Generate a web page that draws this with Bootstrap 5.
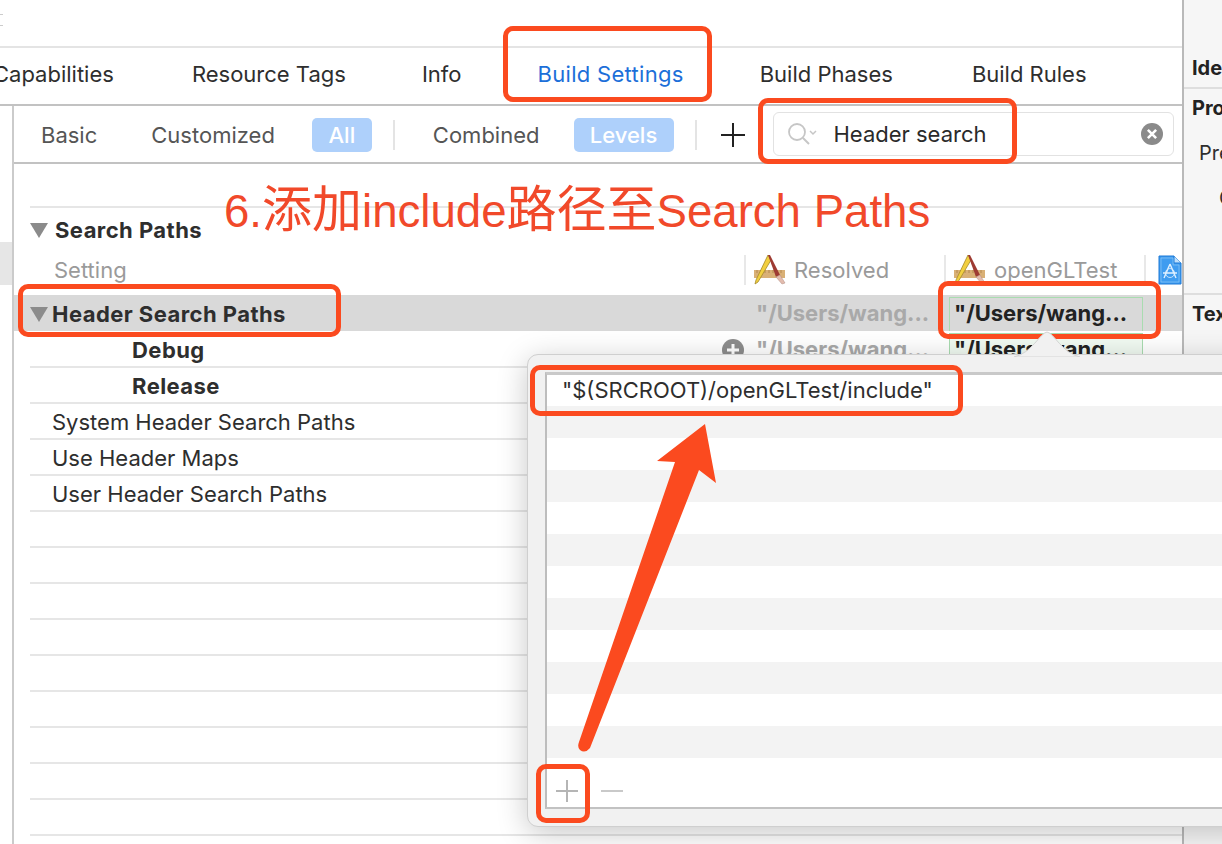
<!doctype html>
<html lang="en">
<head>
<meta charset="utf-8">
<title>Build Settings</title>
<link rel="stylesheet" href="https://cdn.jsdelivr.net/npm/bootstrap@5.3.0/dist/css/bootstrap.min.css">
<style>
html,body{margin:0;background:#fff}
.stage{position:relative;width:1222px;height:844px;overflow:hidden;background:#fff;font-family:Inter,"Liberation Sans",sans-serif;color:#2e2e2e;font-size:22px;line-height:1}
.workspace{width:1182px;flex:none}
.side-panel{flex:1;border-left:2px solid #b9b9b9;background:#f6f6f6;overflow:hidden}
.topbar{height:48px;border-bottom:2px solid #e4e4e4}
.tabbar{height:58px;border-bottom:2px solid #c2c2c2;gap:78px;margin-left:-7px;padding-bottom:5px;white-space:nowrap}
.tabbar span.on{color:#1c6fd9;margin-left:-2px;letter-spacing:.3px}
.t-info{margin-left:-2px}
.t-bp{margin-left:-2px}
.t-br{margin-left:1px}
.left-rail{width:14px;flex:none;border-right:2px solid #cbcbcb;padding-top:136px}
.rail-sel{height:43px;background:#e6e6e6}
.filters{height:58px;border-bottom:2px solid #c2c2c2;padding:2px 0 0 27px;color:#555;white-space:nowrap}
.f-custom{margin-left:54px}
.f-pill{background:#aed0fb;color:#fff;border-radius:5px;height:34px;display:flex;align-items:center;justify-content:center;font-weight:500}
.f-all{width:60px;margin-left:37px}
.f-lev{width:100px;margin-left:34px}
.f-sep{width:2px;height:30px;margin-left:21px;background:#e4e4e4}
.f-comb{margin-left:38px}
.f-add{margin-left:24px}
.searchbox{width:401px;height:44px;border:1.5px solid #e2e2e2;border-radius:6px;margin:-2px 0 0 28px;color:#2a2a2a;padding:0 10px 0 13px}
.search-txt{margin-left:15px}
.rule-top{height:44px;border-bottom:2px solid #e6e6e6;margin-left:16px}
.sec-row{height:44px;font-weight:700;letter-spacing:.45px;margin-left:16px;gap:7px;color:#2e2e2e}
.tri{width:0;height:0;border-left:9px solid transparent;border-right:9px solid transparent;border-top:15px solid #8b8b8b;flex:none}
.tri-gap{margin-right:4px}
.head-row{height:43px;color:#9a9a9a;padding:0 0 8px 40px}
.val-col{width:200px;flex:none}
.val-sep{border-left:2px solid #e8e8e8;height:30px;padding-left:8px;display:flex;align-items:center;gap:8px}
.last-col{width:38px;flex:none}
.blue-doc{margin-left:4px;flex:none}
.name-col{flex:1}
.set-row{height:36px;margin-left:16px;border-bottom:2px solid #e6e6e6;padding:2px 0 0 22px;white-space:nowrap}
.set-row.hi{background:#d9d9d9;border:0;margin-left:0;padding-left:16px;font-weight:700}
.set-row.sub{font-weight:700;padding-left:102px}
.set-row.first{height:37px;padding-top:3px}
.hi .name-col{letter-spacing:.45px}
.sub .name-col,.sub-name{letter-spacing:.45px}
.val-txt{font-weight:700;color:#a9a9a9;padding:0 0 3px 12px}
.val-own{font-weight:700;color:#222;margin-left:5px;width:194px;height:34px;border:1.5px solid #a9dcb0;border-bottom:0;padding:0 0 3px 4px;display:flex;align-items:center}
.sub .val-own{background:#f1faf2}
.pop{position:absolute;left:527px;top:354px;width:760px;height:473px;background:#f1f1f1;border:1.5px solid #cfcfcf;border-radius:11px;box-shadow:0 6px 30px rgba(0,0,0,.22);padding:17px 0 17px 17px}
.pop-beak{position:absolute;left:1014px;top:331px;z-index:2}
.pop-inner{height:437px;background:#fff;border-left:2px solid #bdbdbd;border-top:3px solid #c9c9c9;border-bottom:2px solid #c2c2c2}
.pl-row{height:32px;padding-left:15px;white-space:nowrap;color:#2e2e2e}
.pl-row:first-child{height:31px;padding-bottom:2px}
.pl-row:nth-child(2n){background:#f3f3f3}
.pop-tools{height:50px;gap:23px;padding:16px 0 0 9px}
.note{position:absolute;border:5px solid #fb4a1f;border-radius:10px;pointer-events:none}
.n1{left:503px;top:26px;width:209px;height:76px}
.n2{left:758px;top:98px;width:259px;height:66px}
.n3{left:18px;top:284px;width:323px;height:53px}
.n4{left:938px;top:281px;width:223px;height:58px}
.n5{left:530px;top:365px;width:433px;height:51px}
.n6{left:536px;top:764px;width:54px;height:59px}
.big-note{position:absolute;left:224px;top:184px;font:45.6px/52px "Liberation Sans","Noto Sans CJK SC",sans-serif;color:#f1492a;white-space:nowrap}
.cjk-part{font-size:50px}
.arrow{position:absolute;left:560px;top:410px}
.frag{position:absolute;white-space:nowrap;font-size:20px}
.frag.bold{font-weight:700;color:#222}
.f1{left:1192px;top:58px}.f2{left:1192px;top:98px}.f3{left:1199px;top:143px}.f4{left:1219px;top:188px}.f5{left:1192px;top:304px}
.p-rule{position:absolute;left:1184px;width:38px;height:2px;background:#dedede}
.r1{top:87px}.r2{top:293px}
.tick{position:absolute;left:0;top:14px;width:3px;height:12px;border-top:1.5px solid #ccc;border-bottom:1.5px solid #ccc}
</style>
</head>
<body>
<div class="stage d-flex">
  <div class="workspace">
    <div class="topbar"></div>
    <div class="tabbar d-flex align-items-center">
      <span>Capabilities</span><span>Resource Tags</span><span class="t-info">Info</span><span class="on">Build Settings</span><span class="t-bp">Build Phases</span><span class="t-br">Build Rules</span>
    </div>
    <div class="d-flex">
      <div class="left-rail"><div class="rail-sel"></div></div>
      <div class="flex-grow-1">
        <div class="filters d-flex align-items-center">
          <span>Basic</span>
          <span class="f-custom">Customized</span>
          <span class="f-pill f-all">All</span>
          <span class="f-sep"></span>
          <span class="f-comb">Combined</span>
          <span class="f-pill f-lev">Levels</span>
          <span class="f-sep"></span>
          <svg class="f-add" width="24" height="24" viewBox="0 0 24 24" aria-hidden="true"><path d="M12 0v24M0 12h24" stroke="#222" stroke-width="2"/></svg>
          <div class="searchbox d-flex align-items-center">
            <svg width="32" height="26" viewBox="0 0 32 26" aria-hidden="true"><circle cx="10" cy="11" r="8" fill="none" stroke="#c6c6c6" stroke-width="1.8"/><path d="M16 17l6 6" stroke="#c6c6c6" stroke-width="2"/><path d="M23 10l3 3 3-3" fill="none" stroke="#c6c6c6" stroke-width="1.5"/></svg>
            <span class="search-txt">Header search</span>
            <svg class="ms-auto" width="22" height="22" viewBox="0 0 24 24" aria-hidden="true"><circle cx="12" cy="12" r="12" fill="#8a8a8a"/><path d="M7.5 7.5l9 9M16.5 7.5l-9 9" stroke="#fff" stroke-width="2.8"/></svg>
          </div>
        </div>
        <div class="rule-top"></div>
        <div class="sec-row d-flex align-items-center"><span class="tri"></span><span>Search Paths</span></div>
        <div class="head-row d-flex align-items-center">
          <span class="name-col">Setting</span>
          <div class="val-col"><div class="val-sep">
            <svg width="32" height="30" viewBox="0 0 32 30" aria-hidden="true"><use href="#xc"/></svg><span>Resolved</span></div></div>
          <div class="val-col"><div class="val-sep">
            <svg width="32" height="30" viewBox="0 0 32 30" aria-hidden="true"><use href="#xc"/></svg><span>openGLTest</span></div></div>
          <div class="last-col"><div class="val-sep"><svg class="blue-doc" width="24" height="30" viewBox="0 0 24 30" aria-hidden="true"><path d="M1 1h15l7 7v21H1z" fill="#3f9cf0" stroke="#1c78d6"/><path d="M16 1v7h7" fill="#bfe0fb" stroke="#1c78d6"/><path d="M3 3h12v7h6v17H3z" fill="none" stroke="#8cc8f7" stroke-width=".7"/><path d="M12 9l-6 14M12 9l6 14M5 18h14" stroke="#dff0ff" stroke-width="1.4" fill="none"/><circle cx="12" cy="18" r="4.5" fill="none" stroke="#dff0ff" stroke-width=".8"/></svg></div></div>
        </div>
        <div class="set-row hi d-flex align-items-center">
          <span class="tri tri-gap"></span>
          <span class="name-col">Header Search Paths</span>
          <div class="val-col val-txt">"/Users/wang...</div>
          <div class="val-col align-self-end"><div class="val-own">"/Users/wang...</div></div>
          <div class="last-col"></div>
        </div>
        <div class="set-row sub first d-flex align-items-center">
          <span class="name-col">Debug</span>
          <svg width="22" height="22" viewBox="0 0 22 22" aria-hidden="true"><circle cx="11" cy="11" r="11" fill="#8d8d8d"/><path d="M11 5v12M5 11h12" stroke="#fff" stroke-width="3"/></svg>
          <div class="val-col val-txt">"/Users/wang...</div>
          <div class="val-col"><div class="val-own">"/Users/wang...</div></div>
          <div class="last-col"></div>
        </div>
        <div class="set-row sub d-flex align-items-center"><span class="sub-name">Release</span></div>
        <div class="set-row d-flex align-items-center">System Header Search Paths</div>
        <div class="set-row d-flex align-items-center">Use Header Maps</div>
        <div class="set-row d-flex align-items-center">User Header Search Paths</div>
        <div class="set-row"></div><div class="set-row"></div><div class="set-row"></div><div class="set-row"></div><div class="set-row"></div><div class="set-row"></div><div class="set-row"></div><div class="set-row"></div><div class="set-row"></div><div class="set-row"></div>
      </div>
    </div>
  </div>
  <div class="side-panel"></div>

  <span class="tick"></span>
  <span class="frag bold f1">Ide</span>
  <span class="p-rule r1"></span>
  <span class="frag bold f2">Pro</span>
  <span class="frag f3">Pre</span>
  <span class="frag f4">C</span>
  <span class="p-rule r2"></span>
  <span class="frag bold f5">Tex</span>

  <svg class="pop-beak" width="66" height="26" viewBox="0 0 66 26" aria-hidden="true"><path d="M0 26C18 22 26 2 33 1c7 1 15 21 33 25z" fill="#f1f1f1" stroke="#d4d4d4" stroke-width="1"/></svg>
  <div class="pop">
    <div class="pop-inner">
      <div class="pl-row d-flex align-items-center">"$(SRCROOT)/openGLTest/include"</div>
      <div class="pl-row"></div><div class="pl-row"></div><div class="pl-row"></div><div class="pl-row"></div><div class="pl-row"></div><div class="pl-row"></div><div class="pl-row"></div><div class="pl-row"></div><div class="pl-row"></div><div class="pl-row"></div><div class="pl-row"></div>
      <div class="pop-tools d-flex align-items-center">
        <svg width="22" height="22" viewBox="0 0 22 22" aria-hidden="true"><path d="M11 0v22M0 11h22" stroke="#b5b5b5" stroke-width="2"/></svg>
        <svg width="22" height="22" viewBox="0 0 22 22" aria-hidden="true"><path d="M0 11h22" stroke="#c9c9c9" stroke-width="2"/></svg>
      </div>
    </div>
  </div>

  <div class="big-note">6.<span class="cjk-part">添加</span>include<span class="cjk-part">路径至</span>Search Paths</div>
  <span class="note n1"></span><span class="note n2"></span><span class="note n3"></span><span class="note n4"></span><span class="note n5"></span><span class="note n6"></span>
  <svg class="arrow" width="170" height="350" viewBox="560 410 170 350" aria-hidden="true"><path d="M705 424L716 483 699 470 590 748Q585 754 580 750 577 747 579 742L675 462 657 461z" fill="#fb4a1f"/></svg>

  <svg width="0" height="0" class="position-absolute" aria-hidden="true"><defs>
    <g id="xc"><path d="M0 15h31v8H0z" fill="#d9b076"/><path d="M3 15v3M7 15v3M11 15v3M15 15v3M19 15v3M23 15v3M27 15v3" stroke="#a97f47" stroke-width=".8"/><path d="M14 0L2 25l-1 4 3-2L17 5z" fill="#f2cf3f" stroke="#a58a2a" stroke-width=".8"/><path d="M14 0l2 0 10 20-4 2z" fill="#9e3b33"/><path d="M22 22l4-2 5 8-3 1z" fill="#e3bcae" stroke="#b08a80" stroke-width=".5"/></g>
  </defs></svg>
</div>
<script src="https://cdn.jsdelivr.net/npm/bootstrap@5.3.0/dist/js/bootstrap.bundle.min.js"></script>
</body>
</html>
